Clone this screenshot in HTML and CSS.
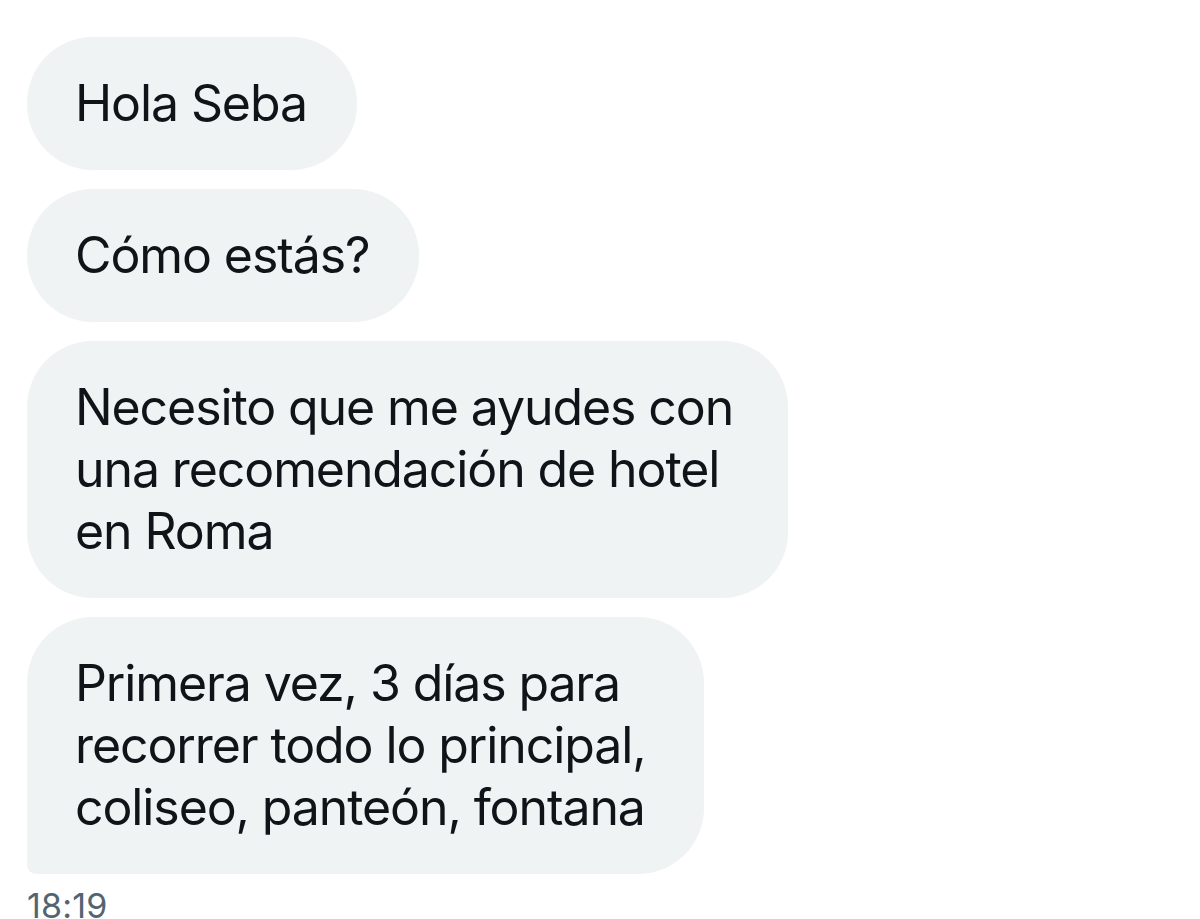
FILE: index.html
```html
<!DOCTYPE html>
<html lang="es">
<head>
<meta charset="utf-8">
<link rel="stylesheet" href="styles.css">
</head>
<body>
<main class="chat">
  <div class="msg">Hola Seba</div>
  <div class="msg">Cómo estás?</div>
  <div class="msg msg--wide">Necesito que me ayudes con<br>una recomendación de hotel<br>en Roma</div>
  <div class="msg msg--last">Primera vez, 3 días para<br>recorrer todo lo principal,<br>coliseo, panteón, fontana</div>
  <div class="time">18:19</div>
</main>
</body>
</html>
```
FILE: styles.css
```css
html, body {
  margin: 0;
  padding: 0;
  background: #ffffff;
}
.chat {
  display: flex;
  flex-direction: column;
  align-items: flex-start;
  gap: 19px;
  padding: 37px 0 0 27px;
  font-family: "Inter", "Roboto", sans-serif;
  color: #0f1419;
}
.msg {
  background: #eff3f4;
  border-radius: 66px;
  padding: 35px 50px 36px 48px;
  font-size: 50px;
  line-height: 62px;
  letter-spacing: -1.1px;
  white-space: nowrap;
}
.msg--wide {
  padding-right: 55px;
}
.msg--last {
  padding-right: 58px;
  border-bottom-left-radius: 9px;
}
.time {
  margin-top: -2px;
  font-size: 34px;
  line-height: 29px;
  letter-spacing: 0.2px;
  color: #536471;
}
```
